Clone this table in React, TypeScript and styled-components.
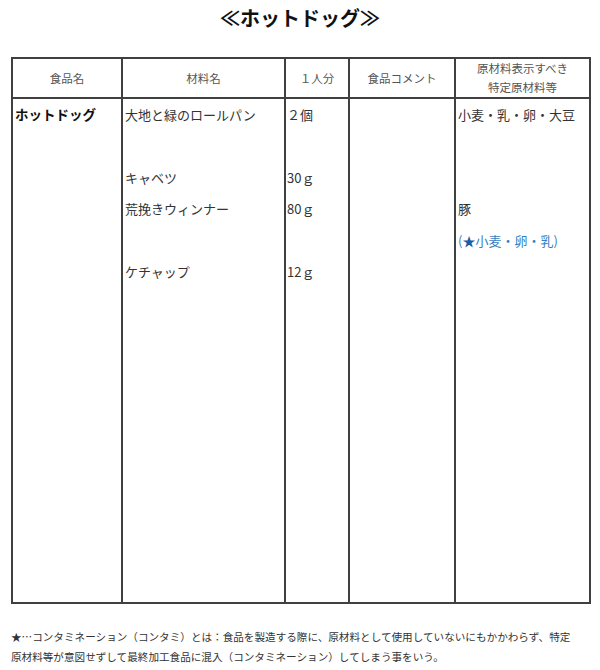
import React from 'react';
import styled, { createGlobalStyle } from 'styled-components';

const GlobalStyle = createGlobalStyle`
    body {
        margin: 0;
        background: #ffffff;
        font-family: "Noto Sans CJK JP", "Noto Sans", sans-serif;
        color: #333333;
    }
`;

const Page = styled.div`
    width: 600px;
    height: 670px;
    padding: 0 0 0 11px;
    box-sizing: border-box;
`;

const Title = styled.h1`
    margin: 0;
    padding-top: 4px;
    height: 57px;
    box-sizing: border-box;
    width: 578px;
    text-align: center;
    font-size: 20px;
    line-height: 28px;
    font-weight: bold;
    color: #111111;
`;

const Table = styled.table`
    width: 578px;
    border-collapse: collapse;
    table-layout: fixed;
`;

const HeadCell = styled.th`
    height: 36px;
    padding: 0;
    border: 2px solid #404040;
    font-size: 11.5px;
    font-weight: normal;
    line-height: 19px;
    color: #555555;
    text-align: center;
    vertical-align: middle;
`;

const BodyCell = styled.td<{ $bold?: boolean; $indent?: number }>`
    height: 503px;
    padding: 0 0 0 ${p => p.$indent ?? 2}px;
    border: 2px solid #404040;
    vertical-align: top;
    font-size: ${p => (p.$bold ? '13.5px' : '13px')};
    font-weight: ${p => (p.$bold ? 'bold' : 'normal')};
    color: ${p => (p.$bold ? '#111111' : '#333333')};
`;

const Line = styled.div<{ $tone?: 'blue' }>`
    height: 31.4px;
    line-height: 31.4px;
    white-space: nowrap;
    color: ${p => (p.$tone === 'blue' ? '#3a7fc1' : 'inherit')};
`;

const Star = styled.span`
    color: #1c5aa6;
`;

const Note = styled.p`
    margin: 0;
    padding-top: 23px;
    width: 562px;
    font-size: 10.6px;
    line-height: 20px;
    color: #333333;
`;

const ingredients: string[] = ['大地と緑のロールパン', '', 'キャベツ', '荒挽きウィンナー', '', 'ケチャップ'];
const amounts: string[] = ['２個', '', '30ｇ', '80ｇ', '', '12ｇ'];

export default function App() {
    return (
        <Page>
            <GlobalStyle />
            <Title>≪ホットドッグ≫</Title>
            <Table>
                <colgroup>
                    <col style={{ width: 110 }} />
                    <col style={{ width: 163 }} />
                    <col style={{ width: 64 }} />
                    <col style={{ width: 106 }} />
                    <col style={{ width: 135 }} />
                </colgroup>
                <thead>
                    <tr>
                        <HeadCell>食品名</HeadCell>
                        <HeadCell>材料名</HeadCell>
                        <HeadCell>１人分</HeadCell>
                        <HeadCell>食品コメント</HeadCell>
                        <HeadCell>原材料表示すべき<br />特定原材料等</HeadCell>
                    </tr>
                </thead>
                <tbody>
                    <tr>
                        <BodyCell $bold $indent={2}>
                            <Line>ホットドッグ</Line>
                        </BodyCell>
                        <BodyCell>
                            {ingredients.map((t, i) => <Line key={i}>{t}</Line>)}
                        </BodyCell>
                        <BodyCell $indent={1}>
                            {amounts.map((t, i) => <Line key={i}>{t}</Line>)}
                        </BodyCell>
                        <BodyCell />
                        <BodyCell>
                            <Line>小麦・乳・卵・大豆</Line>
                            <Line />
                            <Line />
                            <Line>豚</Line>
                            <Line $tone="blue">(<Star>★</Star>小麦・卵・乳)</Line>
                        </BodyCell>
                    </tr>
                </tbody>
            </Table>
            <Note>
                ★…コンタミネーション（コンタミ）とは：食品を製造する際に、原材料として使用していないにもかかわらず、特定原材料等が意図せずして最終加工食品に混入（コンタミネーション）してしまう事をいう。
            </Note>
        </Page>
    );
}
